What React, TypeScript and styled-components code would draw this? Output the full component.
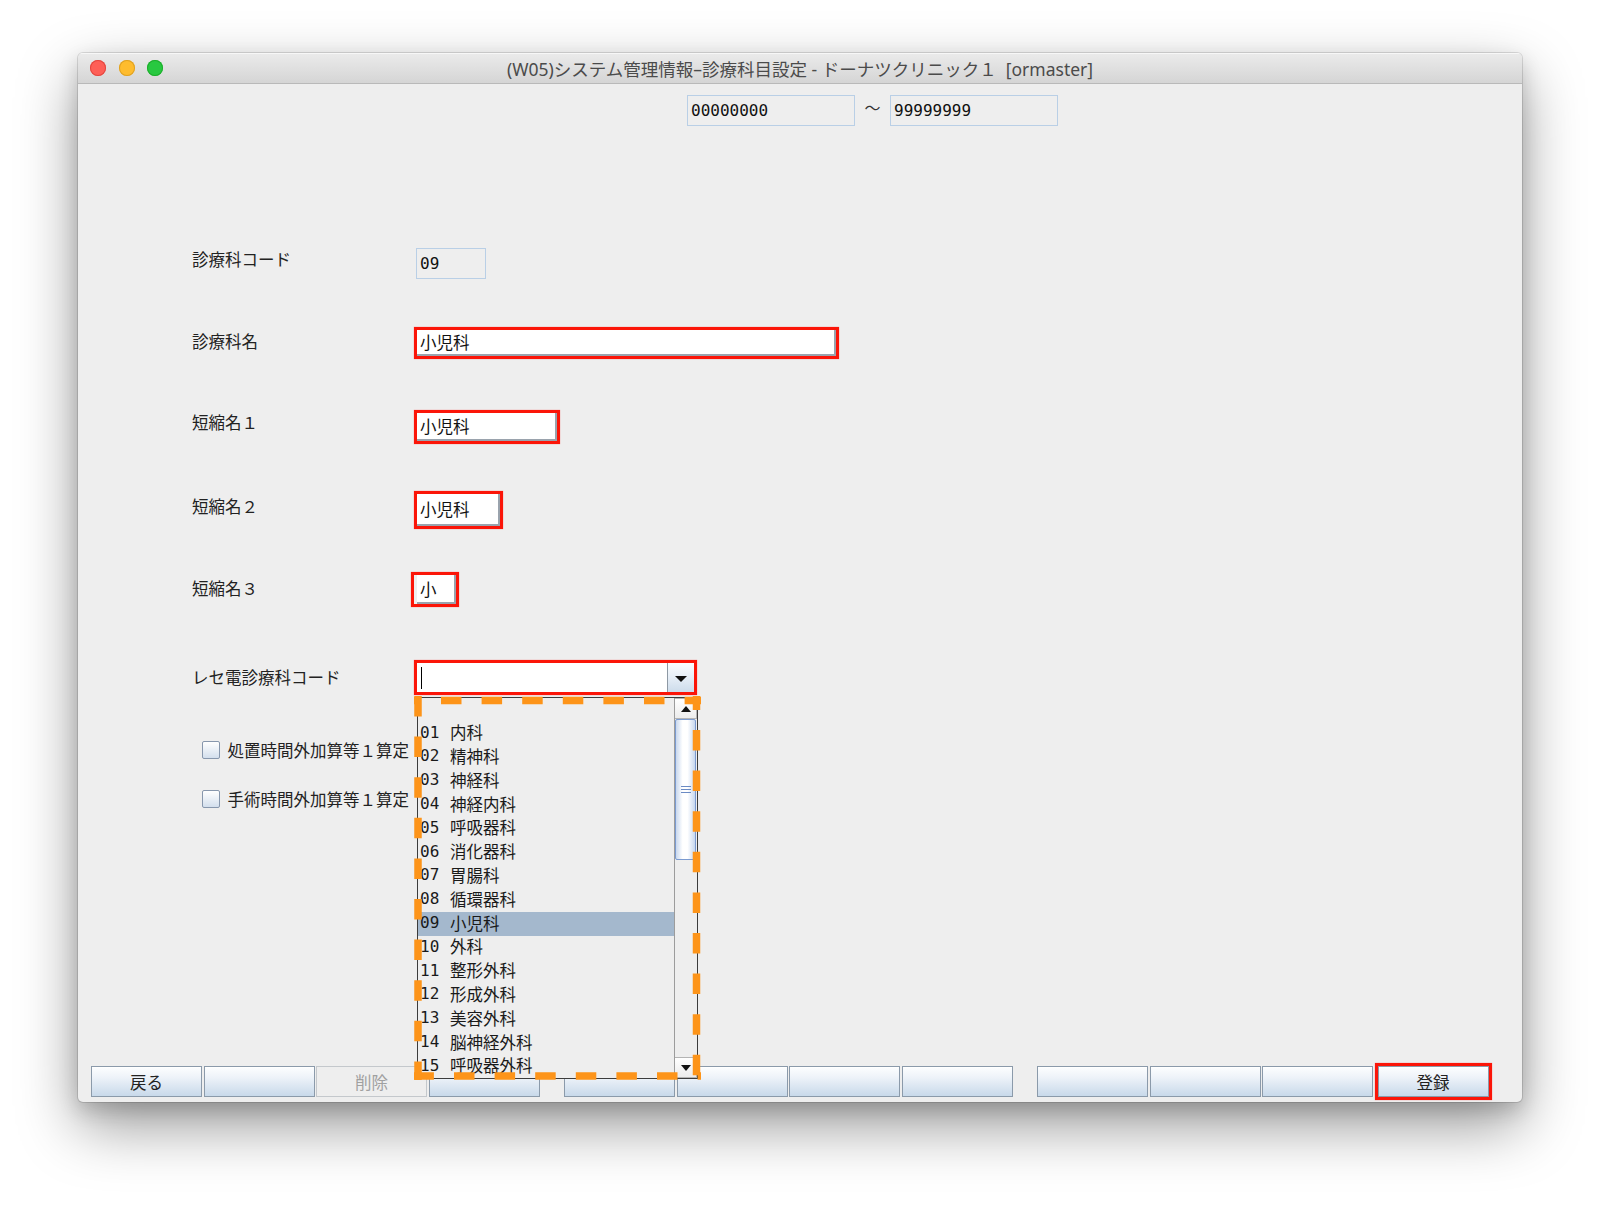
import styled, { createGlobalStyle } from "styled-components"

const GlobalStyle = createGlobalStyle`
  html, body {
    margin: 0;
    padding: 0;
    background: #ffffff;
  }
  body {
    font-family: "Noto Sans CJK JP", "Noto Sans", sans-serif;
    color: #222222;
  }
`

const MONO = `"DejaVu Sans Mono", "Noto Sans CJK JP", monospace`
const GOTHIC = `"Noto Sans CJK JP", "Noto Sans", sans-serif`

const Page = styled.div`
  width: 1600px;
  height: 1206px;
  box-sizing: border-box;
  padding: 53px 0 0 78px;
  overflow: hidden;
`

const Window = styled.div`
  width: 1444px;
  height: 1049px;
  display: flex;
  flex-direction: column;
  background: #eeeeee;
  border-radius: 5px;
  overflow: hidden;
  box-shadow: 0 0 0 1px rgba(0, 0, 0, 0.12), 0 24px 60px rgba(0, 0, 0, 0.4),
    0 8px 20px rgba(0, 0, 0, 0.16);
`

const TitleBar = styled.div`
  height: 31px;
  flex: none;
  box-sizing: border-box;
  display: grid;
  grid-template-columns: 1fr auto 1fr;
  align-items: center;
  background: linear-gradient(#ebebeb, #d5d5d5);
  border-bottom: 1px solid #b9b9b9;
  box-shadow: inset 0 1px 0 #f7f7f7;
`

const Lights = styled.div`
  display: flex;
  gap: 12.5px;
  padding-left: 12px;
`

const Light = styled.span<{ $fill: string; $edge: string }>`
  width: 16px;
  height: 16px;
  border-radius: 50%;
  background: ${(p) => p.$fill};
  box-shadow: inset 0 0 0 1px ${(p) => p.$edge};
`

const Title = styled.div`
  font-family: "Noto Sans", "Noto Sans CJK JP", sans-serif;
  font-size: 17.5px;
  line-height: 20px;
  padding-top: 2px;
  color: #4b4b4b;
  white-space: pre;
`

const Content = styled.div`
  flex: 1;
  display: flex;
  flex-direction: column;
`

const RangeRow = styled.div`
  display: flex;
  align-items: center;
  height: 31px;
  margin-top: 11px;
  padding-left: 609px;
`

const ValueBox = styled.div<{ $w: number }>`
  width: ${(p) => p.$w}px;
  height: 31px;
  box-sizing: border-box;
  border: 1px solid #b9cfe6;
  background: #eeeeee;
  padding-left: 3px;
  font-family: ${MONO};
  font-size: 16px;
  line-height: 29px;
  color: #111111;
`

const Tilde = styled.span`
  width: 35px;
  text-align: center;
  font-size: 16px;
  margin-top: -7px;
  color: #333333;
`

const FormRow = styled.div<{ $top: number }>`
  display: flex;
  align-items: center;
  height: 40px;
  margin-top: ${(p) => p.$top}px;
  padding-left: 114px;
`

const Label = styled.div<{ $lift?: number }>`
  width: 222px;
  flex: none;
  font-family: ${GOTHIC};
  font-size: 16.5px;
  line-height: 20px;
  margin-top: ${(p) => -(p.$lift ?? 4)}px;
  color: #222222;
`

const RedFrame = styled.div<{ $padLeft?: number }>`
  display: flex;
  border: 3px solid #fb1508;
  padding-left: ${(p) => p.$padLeft ?? 0}px;
  box-shadow: 0 0 1px rgba(255, 40, 40, 0.6);
`

const TextField = styled.div<{ $w: number; $h: number }>`
  width: ${(p) => p.$w}px;
  height: ${(p) => p.$h}px;
  box-sizing: border-box;
  display: flex;
  align-items: center;
  padding-left: 3px;
  background: #ffffff;
  border-right: 2px solid #9aa3ad;
  border-bottom: 2px solid #9aa3ad;
  font-family: ${GOTHIC};
  font-size: 16.5px;
  color: #111111;
  overflow: hidden;
  white-space: nowrap;
`

const CodeBox = styled(ValueBox)`
  margin-left: 2px;
`

const ComboFrame = styled(RedFrame)`
  position: relative;
`

const ComboField = styled.div`
  width: 251px;
  height: 29px;
  box-sizing: border-box;
  display: flex;
  align-items: center;
  padding-left: 4px;
  background: #ffffff;
  border-right: 1px solid #8e99a4;
`

const Caret = styled.span`
  width: 1px;
  height: 22px;
  background: #000000;
`

const ArrowButton = styled.div`
  width: 26px;
  height: 29px;
  display: flex;
  align-items: center;
  justify-content: center;
  background: linear-gradient(#fbfdff, #e6eef7 50%, #cddceb);

  &::after {
    content: "";
    border-left: 6px solid transparent;
    border-right: 6px solid transparent;
    border-top: 6px solid #111111;
    margin-top: 2px;
  }
`

const Popup = styled.div`
  position: absolute;
  left: 0;
  top: 34px;
  width: 281px;
  height: 382px;
  box-sizing: border-box;
  z-index: 5;
  display: flex;
  background: #eeeeee;
  border: 1px solid #3c3c3c;
  overflow: hidden;
`

const ListBody = styled.div`
  flex: 1;
  display: flex;
  flex-direction: column;
`

const Item = styled.div<{ $selected?: boolean }>`
  height: 23.8px;
  flex: none;
  box-sizing: border-box;
  display: flex;
  align-items: center;
  padding: 0 0 3px 2px;
  background: ${(p) => (p.$selected ? "#a4b8cd" : "transparent")};
  color: #1a1a1a;
  white-space: nowrap;
`

const ItemCode = styled.span`
  width: 30px;
  font-family: ${MONO};
  font-size: 16px;
`

const ItemName = styled.span`
  font-family: ${GOTHIC};
  font-size: 16.5px;
`

const ScrollBar = styled.div`
  width: 23px;
  flex: none;
  box-sizing: border-box;
  display: flex;
  flex-direction: column;
  border-left: 1px solid #9c9c9c;
  background: #eeeeee;
`

const ScrollButton = styled.div<{ $down?: boolean }>`
  height: 21px;
  flex: none;
  box-sizing: border-box;
  display: flex;
  align-items: center;
  justify-content: center;
  background: linear-gradient(#ffffff, #ececec);
  border: 1px solid #b4b4b4;
  border-left: none;

  &::after {
    content: "";
    border-left: 5px solid transparent;
    border-right: 5px solid transparent;
    ${(p) =>
      p.$down ? "border-top: 6px solid #111111;" : "border-bottom: 6px solid #111111;"}
  }
`

const Thumb = styled.div`
  height: 141px;
  flex: none;
  box-sizing: border-box;
  margin-right: 1px;
  display: flex;
  align-items: center;
  justify-content: center;
  border: 1px solid #7b9bd0;
  border-radius: 2px;
  background: linear-gradient(90deg, #c9d8ee, #ffffff 35%, #ffffff 60%, #c7d7ee);
`

const Grip = styled.div`
  width: 10px;
  height: 7px;
  background: repeating-linear-gradient(#6b8bc4 0 1px, transparent 1px 3px);
`

const Track = styled.div`
  flex: 1;
`

const DashOverlay = styled.svg`
  position: absolute;
  left: -3px;
  top: 33px;
  z-index: 6;
  overflow: visible;
`

const CheckRow = styled.div<{ $top: number }>`
  display: flex;
  align-items: center;
  gap: 7.5px;
  height: 30px;
  margin-top: ${(p) => p.$top}px;
  padding-left: 124px;
  white-space: nowrap;
  font-family: ${GOTHIC};
  font-size: 16.5px;
  color: #222222;
`

const CheckBox = styled.span`
  width: 18px;
  height: 18px;
  box-sizing: border-box;
  border: 1px solid #8797ad;
  border-radius: 2px;
  background: linear-gradient(#ffffff, #d3dfed);
`

const ButtonBar = styled.div`
  margin-top: auto;
  display: flex;
  gap: 24.5px;
  padding: 0 0 5px 13px;
`

const ButtonGroup = styled.div`
  display: flex;
  align-items: center;
  gap: 1.5px;
`

const Key = styled.div<{ $disabled?: boolean }>`
  width: 111px;
  height: 31px;
  box-sizing: border-box;
  display: flex;
  align-items: center;
  justify-content: center;
  font-family: ${GOTHIC};
  font-size: 16.5px;
  border: 1px solid ${(p) => (p.$disabled ? "#c4c8cc" : "#8b9aaa")};
  color: ${(p) => (p.$disabled ? "#a0a0a0" : "#222222")};
  background: ${(p) =>
    p.$disabled ? "#eeeeee" : "linear-gradient(#fdfeff 0%, #eef3f9 35%, #c8d9ea 100%)"};
  box-shadow: ${(p) => (p.$disabled ? "none" : "inset 0 1px 0 #ffffff")};
`

const KeyFrame = styled(RedFrame)`
  margin: -3px 0;
`

const departments = [
  ["01", "内科"],
  ["02", "精神科"],
  ["03", "神経科"],
  ["04", "神経内科"],
  ["05", "呼吸器科"],
  ["06", "消化器科"],
  ["07", "胃腸科"],
  ["08", "循環器科"],
  ["09", "小児科"],
  ["10", "外科"],
  ["11", "整形外科"],
  ["12", "形成外科"],
  ["13", "美容外科"],
  ["14", "脳神経外科"],
  ["15", "呼吸器外科"],
]

const DASH = "20.5 20.1"

export default function App() {
  return (
    <Page>
      <GlobalStyle />
      <Window>
        <TitleBar>
          <Lights>
            <Light $fill="#fe5f57" $edge="#e2463f" />
            <Light $fill="#febc2e" $edge="#dea123" />
            <Light $fill="#28c840" $edge="#1dad2b" />
          </Lights>
          <Title>(W05)システム管理情報–診療科目設定 - ドーナツクリニック１  [ormaster]</Title>
          <div />
        </TitleBar>

        <Content>
          <RangeRow>
            <ValueBox $w={168}>00000000</ValueBox>
            <Tilde>〜</Tilde>
            <ValueBox $w={168}>99999999</ValueBox>
          </RangeRow>

          <FormRow $top={117.5}>
            <Label $lift={10}>診療科コード</Label>
            <CodeBox $w={70}>09</CodeBox>
          </FormRow>

          <FormRow $top={39.5}>
            <Label>診療科名</Label>
            <RedFrame>
              <TextField $w={419} $h={26}>小児科</TextField>
            </RedFrame>
          </FormRow>

          <FormRow $top={44}>
            <Label $lift={10}>短縮名１</Label>
            <RedFrame>
              <TextField $w={140} $h={28}>小児科</TextField>
            </RedFrame>
          </FormRow>

          <FormRow $top={43}>
            <Label $lift={8}>短縮名２</Label>
            <RedFrame>
              <TextField $w={83} $h={32}>小児科</TextField>
            </RedFrame>
          </FormRow>

          <FormRow $top={39.5}>
            <Label>短縮名３</Label>
            <RedFrame $padLeft={3} style={{ marginLeft: -3 }}>
              <TextField $w={39} $h={29}>小</TextField>
            </RedFrame>
          </FormRow>

          <FormRow $top={48}>
            <Label $lift={2}>レセ電診療科コード</Label>
            <ComboFrame>
              <ComboField>
                <Caret />
              </ComboField>
              <ArrowButton />
              <Popup>
                <ListBody>
                  <Item />
                  {departments.map(([code, name]) => (
                    <Item key={code} $selected={code === "09"}>
                      <ItemCode>{code}</ItemCode>
                      <ItemName>{name}</ItemName>
                    </Item>
                  ))}
                </ListBody>
                <ScrollBar>
                  <ScrollButton />
                  <Thumb>
                    <Grip />
                  </Thumb>
                  <Track />
                  <ScrollButton $down />
                </ScrollBar>
              </Popup>
              <DashOverlay width="288" height="387" viewBox="0 0 288 387">
                <g stroke="#fd9419" strokeWidth="7.5" fill="none">
                  <line x1="0" y1="4.5" x2="287" y2="4.5" strokeDasharray={DASH} strokeDashoffset="13.6" />
                  <line x1="282.5" y1="0" x2="282.5" y2="384" strokeDasharray={DASH} strokeDashoffset="6.6" />
                  <line x1="0" y1="380" x2="287" y2="380" strokeDasharray={DASH} strokeDashoffset="0.6" />
                  <line x1="4" y1="0" x2="4" y2="384" strokeDasharray={DASH} strokeDashoffset="0" />
                </g>
              </DashOverlay>
            </ComboFrame>
          </FormRow>

          <CheckRow $top={37.5}>
            <CheckBox />
            処置時間外加算等１算定
          </CheckRow>
          <CheckRow $top={19}>
            <CheckBox />
            手術時間外加算等１算定
          </CheckRow>

          <ButtonBar>
            <ButtonGroup>
              <Key>戻る</Key>
              <Key />
              <Key $disabled>削除</Key>
              <Key />
            </ButtonGroup>
            <ButtonGroup>
              <Key />
              <Key />
              <Key />
              <Key />
            </ButtonGroup>
            <ButtonGroup>
              <Key />
              <Key />
              <Key />
              <KeyFrame>
                <Key>登録</Key>
              </KeyFrame>
            </ButtonGroup>
          </ButtonBar>
        </Content>
      </Window>
    </Page>
  )
}
